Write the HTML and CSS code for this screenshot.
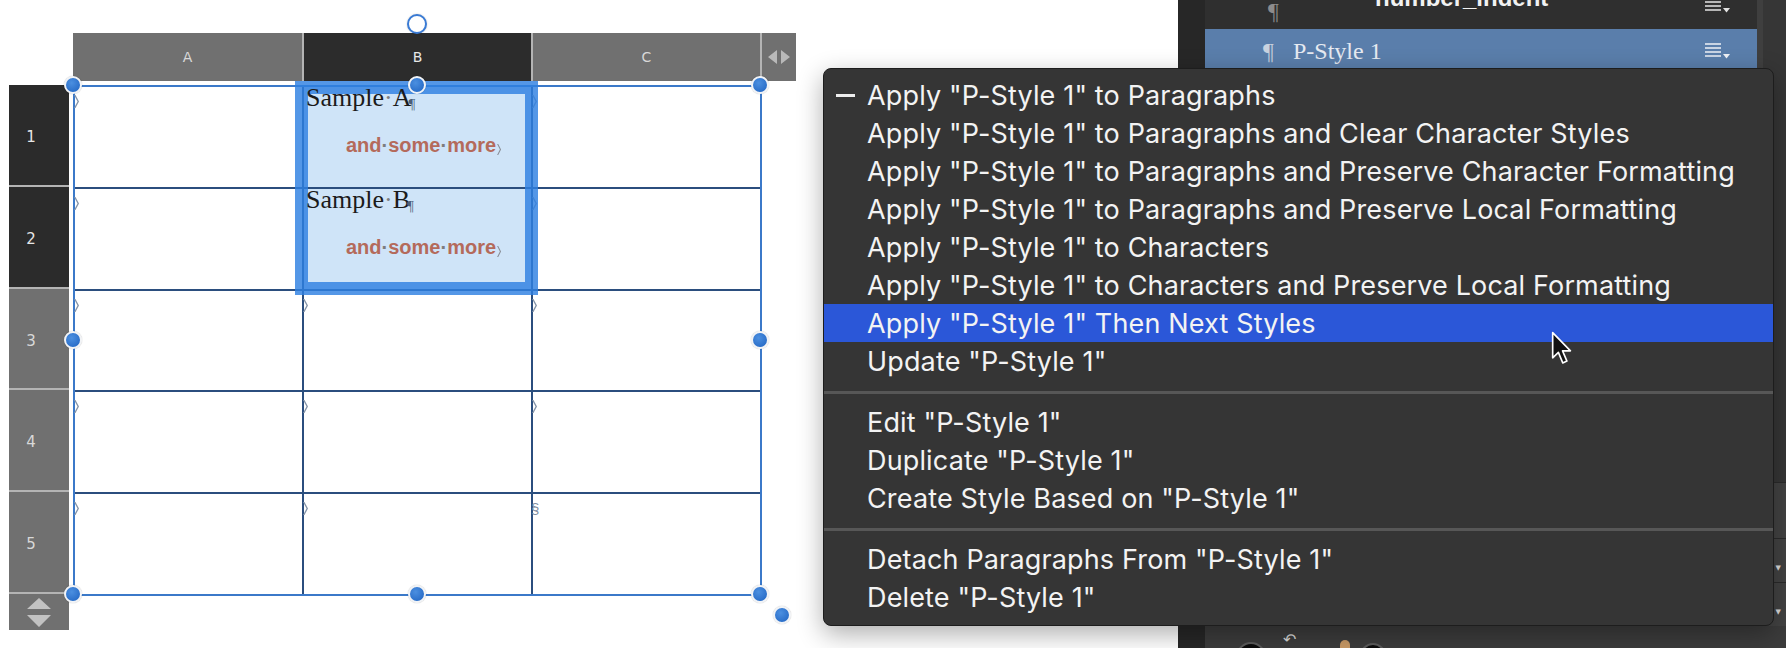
FILE: index.html
```html
<!DOCTYPE html>
<html lang="en">
<head>
    <meta charset="UTF-8">
    <meta name="viewport" content="width=device-width, initial-scale=1.0">
    <title>Paragraph Style Menu</title>
    <link rel="stylesheet" href="styles.css">
</head>
<body>
<div class="app">
    <div class="canvas">
        <div class="sheet">
            <div class="corner"></div>
            <div class="col-heads">
                <div class="col-head">A</div>
                <div class="col-head active">B</div>
                <div class="col-head">C</div>
                <div class="col-head arrows">
                    <svg width="22" height="14" viewBox="0 0 22 14"><path d="M0 7 9 0v14zM13 0l9 7-9 7z" fill="#b9b9b9"/></svg>
                </div>
            </div>
            <div class="row-heads">
                <div class="row-head active">1</div>
                <div class="row-head active">2</div>
                <div class="row-head short">3</div>
                <div class="row-head">4</div>
                <div class="row-head">5</div>
                <div class="row-head arrows">
                    <svg width="24" height="29" viewBox="0 0 24 29"><path d="M0 11 12 0l12 11zM0 17h24L12 29z" fill="#c2c2c2"/></svg>
                </div>
            </div>
            <div class="table">
                <div class="cell"><span class="mark"></span></div>
                <div class="cell sel">
                    <p class="serif">Sample<span class="dot">·</span>A<span class="pil">¶</span></p>
                    <p class="more">and<span class="dot">·</span>some<span class="dot">·</span>more<span class="end"></span></p>
                </div>
                <div class="cell"><span class="mark"></span></div>

                <div class="cell"><span class="mark"></span></div>
                <div class="cell sel">
                    <p class="serif">Sample<span class="dot">·</span>B<span class="pil">¶</span></p>
                    <p class="more">and<span class="dot">·</span>some<span class="dot">·</span>more<span class="end"></span></p>
                </div>
                <div class="cell"><span class="mark"></span></div>

                <div class="cell"><span class="mark"></span></div>
                <div class="cell"><span class="mark"></span></div>
                <div class="cell"><span class="mark"></span></div>

                <div class="cell"><span class="mark"></span></div>
                <div class="cell"><span class="mark"></span></div>
                <div class="cell"><span class="mark"></span></div>

                <div class="cell"><span class="mark"></span></div>
                <div class="cell"><span class="mark"></span></div>
                <div class="cell"><span class="sect">§</span></div>

                <div class="selection"></div>
                <span class="rotate"></span>
                <span class="handle h-tl"></span>
                <span class="handle h-tc"></span>
                <span class="handle h-tr"></span>
                <span class="handle h-ml"></span>
                <span class="handle h-mr"></span>
                <span class="handle h-bl"></span>
                <span class="handle h-bc"></span>
                <span class="handle h-br"></span>
                <span class="handle h-ex"></span>
            </div>
        </div>
    </div>

    <div class="panel">
        <div class="gutter"></div>
        <div class="panel-main">
            <div class="panel-body">
                <div class="style-list">
                    <div class="style-row first">
                        <span class="pil-icon dim">¶</span>
                        <span class="style-name bold">number_indent</span>
                        <svg class="row-menu" width="26" height="16" viewBox="0 0 26 16"><path d="M0 1h16M0 5h16M0 9h16M0 13h16" stroke="#e4e4e4" stroke-width="1.6"/><path d="M18 11h7l-3.5 4.5z" fill="#e4e4e4"/></svg>
                    </div>
                    <div class="style-row selected">
                        <span class="pil-icon">¶</span>
                        <span class="style-name">P-Style 1</span>
                        <svg class="row-menu" width="26" height="16" viewBox="0 0 26 16"><path d="M0 1h16M0 5h16M0 9h16M0 13h16" stroke="#eef1f6" stroke-width="1.6"/><path d="M18 11h7l-3.5 4.5z" fill="#eef1f6"/></svg>
                    </div>
                </div>
                <div class="scroll">
                    <div class="scroll-track"></div>
                    <div class="srow tall"></div>
                    <div class="srow"><span>▼</span></div>
                    <div class="srow"><span>▼</span></div>
                </div>
            </div>
            <div class="panel-foot">
                <span class="ball"></span>
                <span class="undo">↶</span>
                <span class="figure"></span>
                <span class="ball small"></span>
            </div>
        </div>
    </div>

    <div class="menu">
        <div class="item checked"><span class="tick"></span>Apply "P-Style 1" to Paragraphs</div>
        <div class="item"><span class="tick"></span>Apply "P-Style 1" to Paragraphs and Clear Character Styles</div>
        <div class="item"><span class="tick"></span>Apply "P-Style 1" to Paragraphs and Preserve Character Formatting</div>
        <div class="item"><span class="tick"></span>Apply "P-Style 1" to Paragraphs and Preserve Local Formatting</div>
        <div class="item"><span class="tick"></span>Apply "P-Style 1" to Characters</div>
        <div class="item"><span class="tick"></span>Apply "P-Style 1" to Characters and Preserve Local Formatting</div>
        <div class="item hover"><span class="tick"></span>Apply "P-Style 1" Then Next Styles</div>
        <div class="item"><span class="tick"></span>Update "P-Style 1"</div>
        <div class="sep"></div>
        <div class="item"><span class="tick"></span>Edit "P-Style 1"</div>
        <div class="item"><span class="tick"></span>Duplicate "P-Style 1"</div>
        <div class="item"><span class="tick"></span>Create Style Based on "P-Style 1"</div>
        <div class="sep"></div>
        <div class="item"><span class="tick"></span>Detach Paragraphs From "P-Style 1"</div>
        <div class="item"><span class="tick"></span>Delete "P-Style 1"</div>
    </div>

    <svg class="cursor" width="22" height="34" viewBox="0 0 20 31">
        <path d="M1.5 1.5v23l5.2-5 4 9.6 3.8-1.7-4-9.3h7.2z" fill="#111" stroke="#fff" stroke-width="1.5" stroke-linejoin="round"/>
    </svg>
</div>
</body>
</html>
```

FILE: styles.css
```css
* {
    box-sizing: border-box;
}
body {
    margin: 0;
    width: 1786px;
    height: 648px;
    overflow: hidden;
    background-color: #fff;
    font-family: "DejaVu Sans", sans-serif;
}
.app {
    position: relative;
    display: flex;
    height: 648px;
}

/* canvas with the table object */
.canvas {
    flex: 0 0 1178px;
    padding: 33px 0 0 9px;
}
.sheet {
    display: grid;
    grid-template-columns: 60px auto;
    grid-template-rows: 48px auto;
    gap: 4px;
    justify-content: start;
    align-items: start;
}
.col-heads {
    display: flex;
    height: 48px;
}
.col-head {
    width: 229px;
    background-color: #707070;
    color: #d8d8d8;
    font-size: 14px;
    display: flex;
    align-items: center;
    justify-content: center;
}
.col-head + .col-head {
    border-left: 2px solid #b4b4b4;
}
.col-head.active {
    background-color: #2c2c2c;
    color: #e8e8e8;
}
.col-head.arrows {
    width: 36px;
}
.row-heads {
    display: flex;
    flex-direction: column;
}
.row-head {
    height: 102px;
    background-color: #707070;
    border-bottom: 2px solid #b4b4b4;
    color: #d8d8d8;
    font-size: 15px;
    display: flex;
    align-items: center;
    justify-content: center;
    padding: 4px 16px 0 0;
}
.row-head.short {
    height: 101px;
}
.row-head.active {
    background-color: #2b2b2b;
    color: #e6e6e6;
}
.row-head.arrows {
    height: 36px;
    border-bottom: 0;
    padding: 0;
}

.table {
    position: relative;
    justify-self: start;
    display: grid;
    grid-template-columns: repeat(3, 227px);
    grid-template-rows: 100px 100px 99px 100px 100px;
    gap: 2px;
    background-color: #2b4e7e;
    border: 2px solid #3b79c9;
}
.cell {
    background-color: #fff;
    padding-top: 7px;
}
.cell p {
    margin: 0;
    position: relative;
    z-index: 2;
    white-space: nowrap;
}
/* end-of-cell marker */
.mark {
    display: block;
    width: 5px;
    height: 13px;
    margin: 1px 0 0 -1px;
    background-color: #8594a8;
    clip-path: polygon(0 0, 30% 0, 100% 50%, 30% 100%, 0 100%, 70% 50%);
}
.sect {
    display: block;
    margin: 0 0 0 -2px;
    font-family: "Liberation Sans", sans-serif;
    font-size: 15px;
    line-height: 15px;
    color: #7f8ea2;
}
.cell.sel {
    background-color: #cfe4f8;
    padding: 0 0 0 2px;
}
.serif {
    margin-top: -2px !important;
    font-family: "Liberation Serif", serif;
    font-size: 26px;
    line-height: 26px;
    color: #1b1b1b;
}
.more {
    margin: 18px 0 0 40px !important;
    font-family: "Liberation Sans", sans-serif;
    font-weight: bold;
    font-size: 20px;
    line-height: 20px;
    color: #b46a5b;
}
.dot {
    color: #7d7d7d;
}
.pil {
    font-size: 15px;
    color: #4d5f78;
    margin-left: -3px;
    vertical-align: -3px;
}
.end {
    display: inline-block;
    width: 4px;
    height: 11px;
    margin-left: 1px;
    vertical-align: -3px;
    background-color: #8b8f98;
    clip-path: polygon(0 0, 30% 0, 100% 50%, 30% 100%, 0 100%, 70% 50%);
}

/* selection and handles lie over the table */
.selection {
    position: absolute;
    left: 220px;
    top: -6px;
    width: 243px;
    height: 214px;
    border: 13px solid rgba(46, 128, 226, 0.82);
    z-index: 1;
}
.handle {
    position: absolute;
    width: 18px;
    height: 18px;
    margin: -9px 0 0 -9px;
    border-radius: 50%;
    border: 2px solid #f1f3f6;
    background: radial-gradient(circle at 40% 35%, #4b8fe0, #1f63c1);
    box-shadow: 0 0 1px rgba(0, 0, 0, 0.4);
    z-index: 3;
}
.h-tl { left: -2px; top: -2px; }
.h-tc { left: 342px; top: -2px; }
.h-tr { left: 685px; top: -2px; }
.h-ml { left: -2px; top: 253px; }
.h-mr { left: 685px; top: 253px; }
.h-bl { left: -2px; top: 507px; }
.h-bc { left: 342px; top: 507px; }
.h-br { left: 685px; top: 507px; }
.h-ex { left: 707px; top: 528px; }
.rotate {
    position: absolute;
    left: 342px;
    top: -63px;
    width: 20px;
    height: 20px;
    margin: -10px 0 0 -10px;
    border-radius: 50%;
    border: 2px solid #3a7bd5;
    background-color: #fff;
    box-shadow: 0 0 2px rgba(0, 0, 0, 0.2);
}

/* right panel */
.panel {
    flex: 0 0 608px;
    display: flex;
    background-color: #2f2f2f;
}
.gutter {
    flex: 0 0 27px;
    background-color: #272727;
}
.panel-main {
    flex: 1;
    display: flex;
    flex-direction: column;
}
.panel-body {
    flex: 1;
    display: flex;
}
.style-list {
    flex: 1;
    background-color: #2f2f2f;
}
.style-row {
    display: flex;
    align-items: center;
    height: 44px;
    padding: 0 26px 0 58px;
    color: #e6eaf1;
}
.style-row.first {
    height: 27px;
    margin-bottom: 2px;
    align-items: flex-end;
    overflow: hidden;
}
.style-row.selected {
    background-color: #5a7eab;
}
.pil-icon {
    width: 30px;
    font-family: "Liberation Serif", serif;
    font-size: 24px;
    color: #c9d2df;
}
.pil-icon.dim {
    margin-left: 5px;
    color: #8c8c8c;
    line-height: 24px;
    margin-bottom: 4px;
}
.style-name {
    font-family: "Liberation Serif", serif;
    font-size: 24px;
    line-height: 24px;
}
.style-name.bold {
    font-family: "Liberation Sans", sans-serif;
    font-weight: bold;
    color: #f2f2f2;
    margin: 0 0 17px 77px;
}
.row-menu {
    margin-left: auto;
}
.style-row.first .row-menu {
    margin-bottom: 14px;
}
.scroll {
    flex: 0 0 29px;
    display: flex;
    flex-direction: column;
    background-color: #363636;
}
.scroll-track {
    flex: 1;
    border-left: 6px solid #3f3f3f;
}
.srow {
    height: 44px;
    background-color: #434343;
    border-top: 1px solid #2b2b2b;
    display: flex;
    align-items: flex-end;
    justify-content: flex-end;
    padding: 0 5px 10px 0;
    color: #dcdcdc;
    font-size: 7px;
}
.srow.tall {
    height: 56px;
}
.panel-foot {
    height: 22px;
    background-color: #3c3c3c;
    display: flex;
    align-items: flex-start;
    padding-left: 31px;
    overflow: hidden;
}
.ball {
    width: 30px;
    height: 30px;
    margin-top: 16px;
    border-radius: 50%;
    background-color: #0c0c0c;
    border: 2px solid #5c5c5c;
}
.ball.small {
    width: 26px;
    height: 26px;
    margin: 17px 0 0 10px;
}
.undo {
    margin: 6px 0 0 17px;
    color: #d8d8d8;
    font-size: 16px;
    line-height: 16px;
}
.figure {
    width: 10px;
    height: 12px;
    margin: 14px 0 0 44px;
    border-radius: 5px 5px 0 0;
    background-color: #c99a66;
}

/* context menu over everything */
.menu {
    position: absolute;
    left: 823px;
    top: 68px;
    width: 951px;
    height: 558px;
    padding: 7px 0 8px;
    background-color: #353535;
    border: 1px solid #1d1d1d;
    border-radius: 8px;
    box-shadow: 0 8px 26px rgba(0, 0, 0, 0.32);
    font-family: Inter, "Noto Sans", sans-serif;
    font-size: 27px;
    letter-spacing: 0.15px;
    color: #f3f3f3;
    z-index: 10;
}
.item {
    height: 38px;
    display: flex;
    align-items: center;
    padding-left: 12px;
    white-space: nowrap;
}
.tick {
    flex: none;
    width: 19px;
    height: 3px;
    margin-right: 12px;
}
.item.checked .tick {
    background-color: #ededed;
}
.item.hover {
    background-color: #2b57d8;
}
.sep {
    height: 3px;
    margin: 11px 0 9px;
    background-color: #575757;
}
.cursor {
    position: absolute;
    left: 1551px;
    top: 331px;
    z-index: 20;
}
```
